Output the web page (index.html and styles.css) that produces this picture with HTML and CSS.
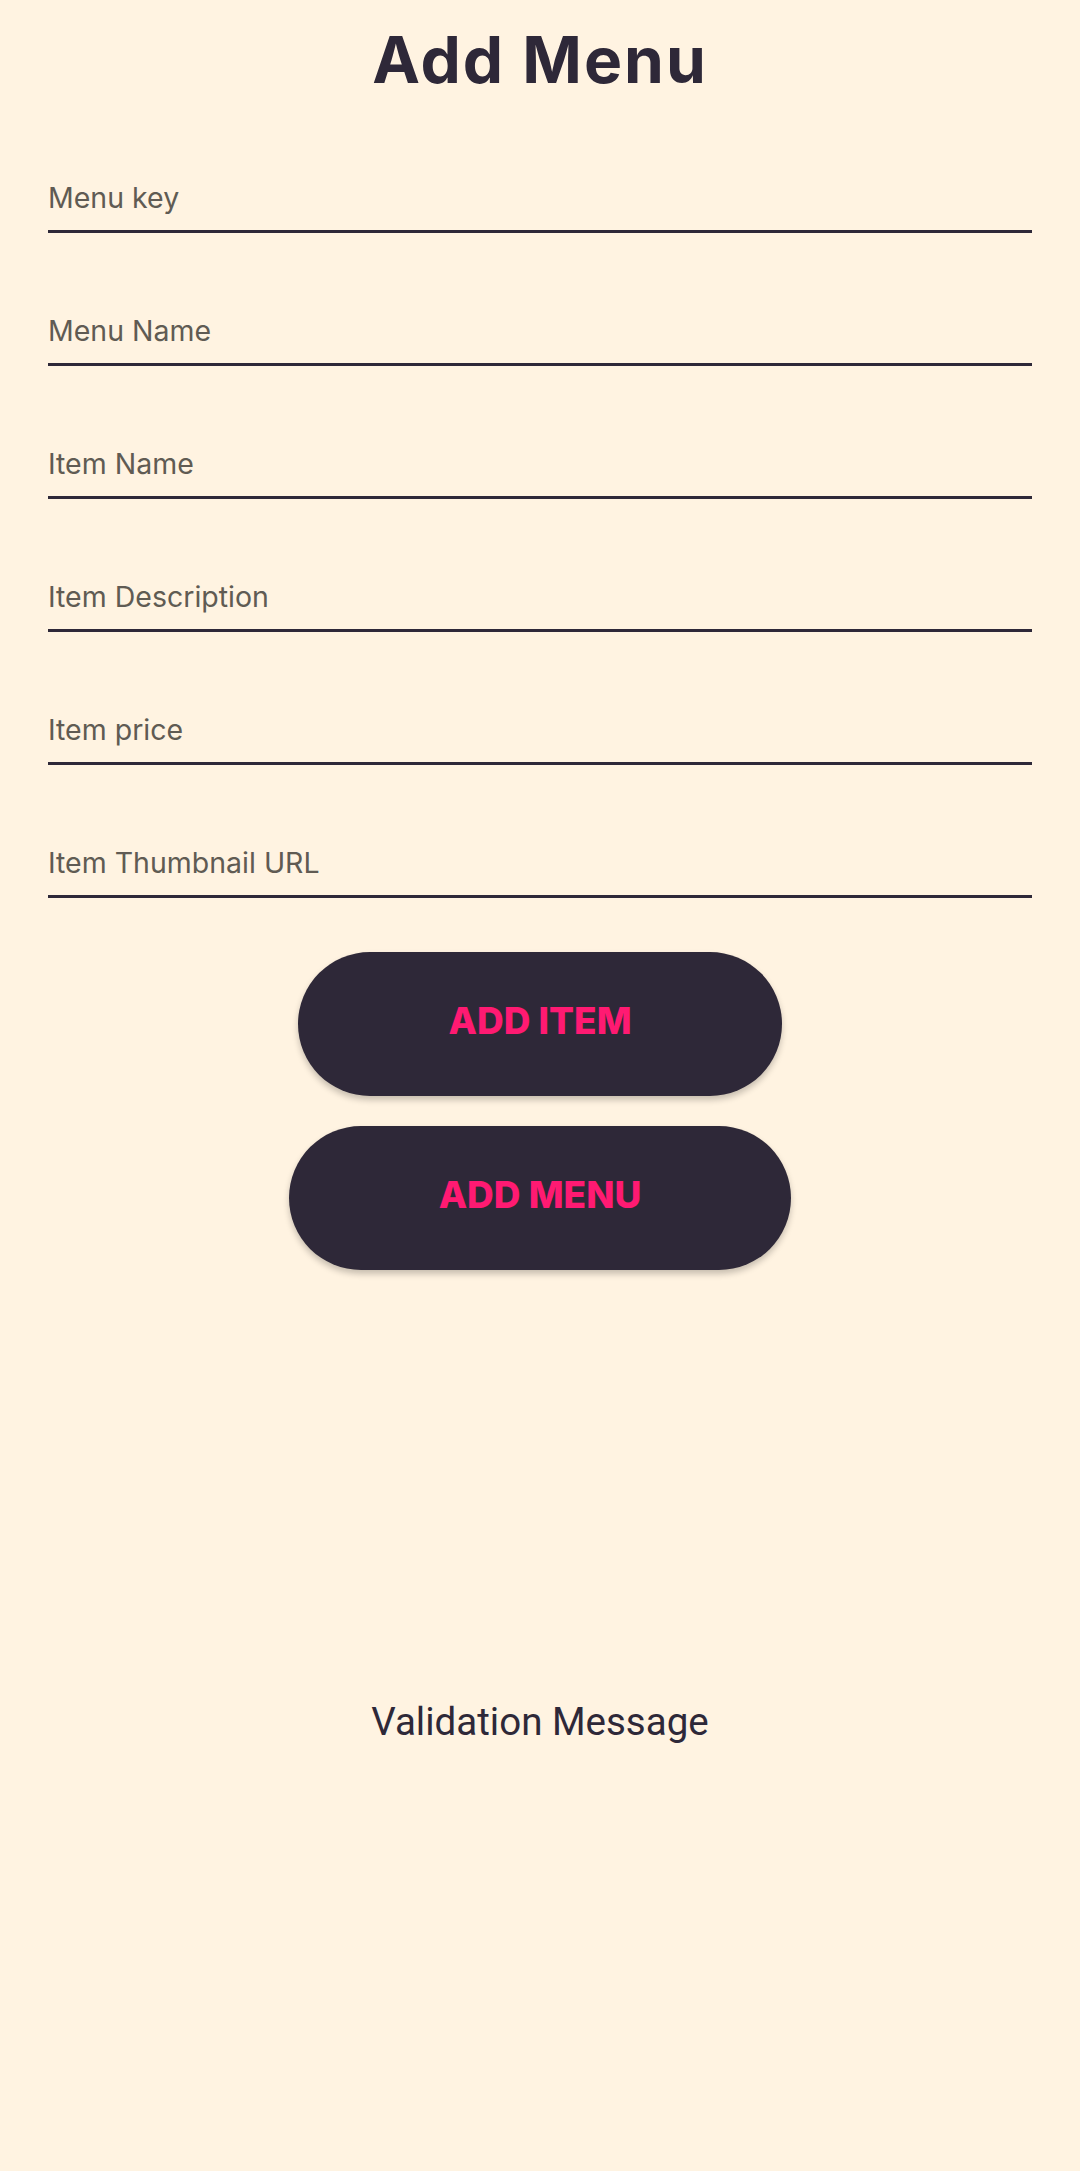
FILE: index.html
```html
<!DOCTYPE html>
<html>
<head>
<meta charset="utf-8">
<link rel="stylesheet" href="styles.css">
</head>
<body>
<div class="page">
  <h1 class="title">Add Menu</h1>
  <form class="form">
    <div class="field"><span class="label">Menu key</span></div>
    <div class="field"><span class="label">Menu Name</span></div>
    <div class="field"><span class="label">Item Name</span></div>
    <div class="field"><span class="label">Item Description</span></div>
    <div class="field"><span class="label">Item price</span></div>
    <div class="field"><span class="label">Item Thumbnail URL</span></div>
  </form>
  <div class="actions">
    <button class="btn" type="button">ADD ITEM</button>
    <button class="btn" type="button">ADD MENU</button>
  </div>
  <p class="validation">Validation Message</p>
</div>
</body>
</html>
```

FILE: styles.css
```css
html, body {
  margin: 0;
  padding: 0;
  background: #fff3e1;
}
.page {
  width: 1080px;
  height: 2171px;
  display: flex;
  flex-direction: column;
  font-family: "Inter", "Noto Sans", sans-serif;
}
.title {
  margin: 0;
  padding-top: 20px;
  line-height: 80px;
  text-align: center;
  font-size: 64px;
  font-weight: 700;
  letter-spacing: 2px;
  color: #2e2838;
}
.form {
  display: flex;
  flex-direction: column;
  padding: 0 48px;
}
.field {
  margin-top: 78px;
  display: flex;
  align-items: flex-end;
  border-bottom: 3px solid #2e2838;
}
.label {
  padding-bottom: 12px;
  font-size: 28.5px;
  line-height: 40px;
  color: #605b53;
}
.actions {
  display: flex;
  flex-direction: column;
  align-items: center;
  gap: 30px;
  padding-top: 54px;
}
.btn {
  height: 144px;
  padding: 0 150px 8px;
  border: none;
  border-radius: 72px;
  background: #2e2838;
  color: #ff1a72;
  font-family: "Inter", "Noto Sans", sans-serif;
  font-weight: 800;
  font-size: 37px;
  box-shadow: 0 4px 6px rgba(0, 0, 0, 0.22);
}
.validation {
  margin: 427px 0 0;
  text-align: center;
  font-family: "Roboto", sans-serif;
  font-size: 38.5px;
  line-height: 50px;
  color: #2e2838;
}
```
